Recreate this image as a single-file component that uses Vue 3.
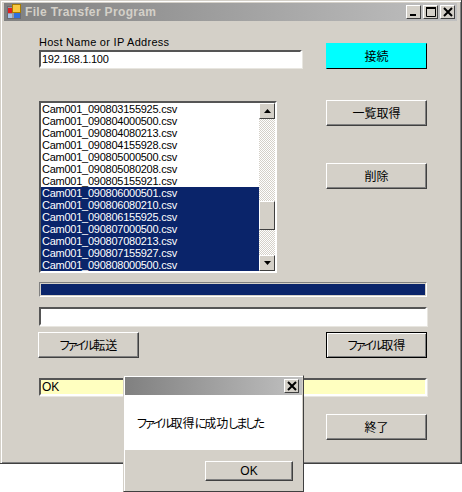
<script setup>
const rows = [
  ['Cam001_090803155925.csv', false],
  ['Cam001_090804000500.csv', false],
  ['Cam001_090804080213.csv', false],
  ['Cam001_090804155928.csv', false],
  ['Cam001_090805000500.csv', false],
  ['Cam001_090805080208.csv', false],
  ['Cam001_090805155921.csv', false],
  ['Cam001_090806000501.csv', true],
  ['Cam001_090806080210.csv', true],
  ['Cam001_090806155925.csv', true],
  ['Cam001_090807000500.csv', true],
  ['Cam001_090807080213.csv', true],
  ['Cam001_090807155927.csv', true],
  ['Cam001_090808000500.csv', true],
]
</script>

<template>
  <div class="page">
    <div class="window">
      <div class="titlebar">
        <svg class="appicon" width="16" height="16" viewBox="0 0 16 16">
          <rect x="0.5" y="2.5" width="13" height="12" fill="#9a9aa0" stroke="#6a6a70" />
          <rect x="5.5" y="0.5" width="8" height="8" fill="#f8c840" stroke="#a87c00" />
          <rect x="1" y="4" width="4" height="5" fill="#e02020" />
          <rect x="7" y="9" width="6" height="5" fill="#3070e0" />
          <rect x="1" y="10" width="4" height="4" fill="#a8c4e8" />
        </svg>
        <span class="title">File Transfer Program</span>
        <div class="caps">
          <span class="cap"><svg width="12" height="12" viewBox="0 0 12 12"><rect x="2" y="8" width="6" height="2" fill="#000" /></svg></span>
          <span class="cap"><svg width="12" height="12" viewBox="0 0 12 12"><path d="M1.5 2H10.5V10.5H1.5Z" fill="none" stroke="#000" stroke-width="1" /><rect x="1" y="1" width="10" height="2" fill="#000" /></svg></span>
          <span class="cap"><svg width="12" height="12" viewBox="0 0 12 12"><path d="M2 2L10 10M10 2L2 10" stroke="#000" stroke-width="2" /></svg></span>
        </div>
      </div>

      <div class="form">
        <div class="row">
          <div class="hostcol">
            <div class="label">Host Name or IP Address</div>
            <div class="field hostfield">192.168.1.100</div>
          </div>
          <button class="btn connect">接続</button>
        </div>

        <div class="row listrow">
          <div class="listbox">
            <div class="items">
              <div v-for="r in rows" :key="r[0]" class="item" :class="{ sel: r[1] }">{{ r[0] }}</div>
            </div>
            <div class="scroll">
              <span class="sbtn"><svg width="7" height="4" viewBox="0 0 7 4"><path d="M3.5 0L7 4H0Z" fill="#000" /></svg></span>
              <span class="track1"></span>
              <span class="thumb"></span>
              <span class="track2"></span>
              <span class="sbtn"><svg width="7" height="4" viewBox="0 0 7 4"><path d="M0 0H7L3.5 4Z" fill="#000" /></svg></span>
            </div>
          </div>
          <div class="sidebtns">
            <button class="btn">一覧取得</button>
            <button class="btn">削除</button>
          </div>
        </div>

        <div class="progress"><div class="bar"></div></div>
        <div class="field wide"></div>

        <div class="row btnrow">
          <button class="btn transfer"><span class="kana">ファイル</span>転送</button>
          <button class="btn focus"><span class="kana">ファイル</span>取得</button>
        </div>

        <div class="field status">OK</div>

        <div class="exitrow">
          <button class="btn">終了</button>
        </div>
      </div>

      <div class="dialog">
        <div class="dtitle">
          <span class="cap"><svg width="12" height="12" viewBox="0 0 12 12"><path d="M2 2L10 10M10 2L2 10" stroke="#000" stroke-width="2" /></svg></span>
        </div>
        <div class="dbody"><span class="kana">ファイル</span>取得<span class="kana">に</span>成功<span class="kana">しました</span></div>
        <div class="dfoot"><button class="btn dok">OK</button></div>
      </div>
    </div>
  </div>
</template>

<style>
html, body { margin: 0; background: #fff; }
</style>

<style scoped>
.page {
  width: 462px;
  height: 492px;
  overflow: hidden;
  background: #fff;
  font-family: "Liberation Sans", "Noto Sans CJK JP", sans-serif;
  font-size: 12px;
  color: #000;
}
.window {
  position: relative;
  box-sizing: border-box;
  width: 462px;
  height: 464px;
  background: #d4d0c8;
  padding: 3px 4px 0;
  border-right: 1px solid #404040;
  border-bottom: 1px solid #404040;
  box-shadow: inset 1px 1px 0 #d4d0c8, inset 2px 2px 0 #fff, inset -1px -1px 0 #808080;
}
.titlebar {
  display: flex;
  align-items: center;
  height: 18px;
  background: linear-gradient(90deg, #808080, #c0c0c0);
}
.appicon { margin-left: 3px; flex: none; }
.title {
  margin-left: 2px;
  font: bold 12px "Liberation Sans", sans-serif;
  letter-spacing: 0.35px;
  color: #d4d0c8;
}
.caps { margin-left: auto; margin-right: 2px; display: flex; gap: 2px; }
.cap {
  box-sizing: border-box;
  width: 15px;
  height: 14px;
  display: flex;
  align-items: center;
  justify-content: center;
  background: #d4d0c8;
  border: 1px solid;
  border-color: #fff #404040 #404040 #fff;
}

.form {
  padding: 15px 30px 0 35px;
  display: flex;
  flex-direction: column;
}
.row {
  display: flex;
  justify-content: space-between;
  align-items: flex-start;
}
.label {
  height: 14px;
  line-height: 13px;
  font-size: 11px;
  letter-spacing: 0.28px;
}
.field {
  box-sizing: border-box;
  background: #fff;
  border: 2px solid;
  border-color: #555 #fff #fff #555;
  box-shadow: 1px 1px 0 #e8e6e0;
  font-size: 11px;
  line-height: 14px;
  padding-left: 1px;
}
.hostfield { width: 263px; height: 18px; letter-spacing: -0.3px; }
.btn {
  box-sizing: border-box;
  width: 101px;
  height: 26px;
  padding: 0 0 2px;
  background: #d4d0c8;
  border: 1px solid;
  border-color: #fff #404040 #404040 #fff;
  box-shadow: inset -1px -1px 0 #808080;
  font-family: "Liberation Sans", "Noto Sans CJK JP", sans-serif;
  font-size: 12px;
  font-feature-settings: "palt";
  color: #000;
}
.kana { letter-spacing: -2px; }
.connect {
  margin-top: 7px;
  background: #00ffff;
  border-color: #00ffff #000 #000 #00ffff;
  box-shadow: none;
}
.listrow { margin-top: 31px; }
.listbox {
  box-sizing: border-box;
  margin-top: 1px;
  width: 238px;
  height: 172px;
  display: flex;
  border: 2px solid;
  border-color: #555 #fff #fff #555;
  background: #fff;
}
.items { width: 218px; flex: none; }
.item {
  height: 12px;
  line-height: 12px;
  font-size: 11px;
  letter-spacing: -0.25px;
  padding-left: 1px;
  white-space: nowrap;
}
.sel { background: #0a246a; color: #fff; }
.scroll {
  width: 16px;
  display: flex;
  flex-direction: column;
}
.sbtn, .thumb {
  box-sizing: border-box;
  width: 16px;
  flex: none;
  background: #d4d0c8;
  border: 1px solid;
  border-color: #fff #404040 #404040 #fff;
  display: flex;
  align-items: center;
  justify-content: center;
}
.sbtn { height: 16px; }
.thumb { height: 29px; }
.track1, .track2 {
  flex: none;
  background-image: conic-gradient(#fff 25%, #d4d0c8 0 50%, #fff 0 75%, #d4d0c8 0);
  background-size: 2px 2px;
}
.track1 { height: 82px; }
.track2 { height: 25px; }
.sidebtns {
  display: flex;
  flex-direction: column;
  gap: 37px;
}
.progress {
  box-sizing: border-box;
  margin-top: 9px;
  height: 15px;
  border: 1px solid;
  border-color: #808080 #fff #fff #808080;
  padding: 1px;
}
.bar { height: 100%; background: #0a246a; }
.wide { margin-top: 10px; height: 19px; }
.btnrow { margin-top: 6px; }
.transfer { margin-left: -1px; }
.focus {
  border-color: #000;
  box-shadow: inset 1px 1px 0 #fff, inset -1px -1px 0 #808080;
}
.status {
  margin-top: 20px;
  height: 18px;
  background: #ffffc0;
  font-size: 12px;
}
.exitrow { margin-top: 18px; display: flex; justify-content: flex-end; }

.dialog {
  position: absolute;
  left: 123px;
  top: 375px;
  box-sizing: border-box;
  width: 181px;
  height: 117px;
  background: #d4d0c8;
  border: 1px solid;
  border-color: #d4d0c8 #404040 #404040 #d4d0c8;
  padding: 1px 1px 0;
  box-shadow: inset 1px 1px 0 #fff;
  display: flex;
  flex-direction: column;
}
.dtitle {
  height: 18px;
  flex: none;
  display: flex;
  align-items: center;
  justify-content: flex-end;
  padding-right: 3px;
  background: linear-gradient(90deg, #808080, #c0c0c0);
}
.dbody {
  height: 55px;
  flex: none;
  background: #fff;
  box-sizing: border-box;
  padding: 22px 0 0 12px;
  line-height: 14px;
  font-feature-settings: "palt";
  font-size: 12px;
}
.dfoot {
  flex: 1;
  display: flex;
  justify-content: flex-end;
  padding: 11px 9px 0 0;
}
.dok { width: 88px; height: 20px; padding: 0; }
</style>
